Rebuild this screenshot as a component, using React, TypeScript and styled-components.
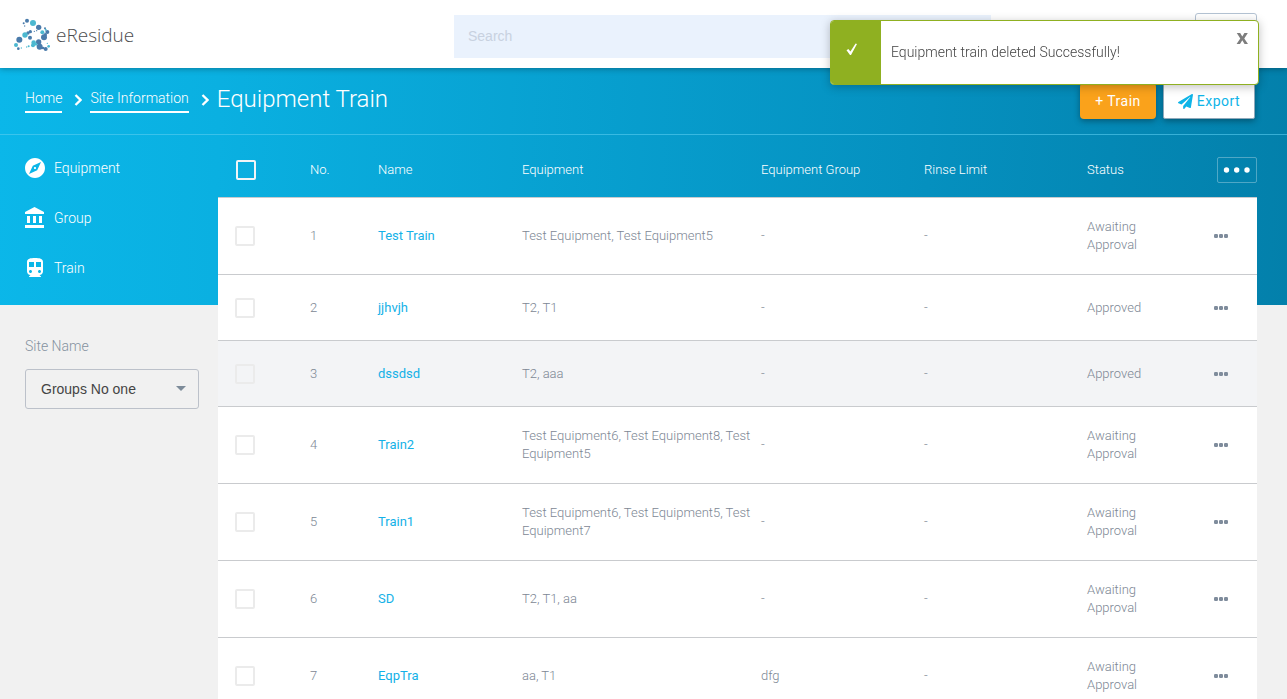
import React from "react";
import styled, { createGlobalStyle } from "styled-components";
import { MdExplore } from "react-icons/md";
import { FaPaperPlane } from "react-icons/fa";

const GlobalStyle = createGlobalStyle`
  *, *::before, *::after { box-sizing: border-box; }
  body {
    margin: 0;
    background: #f1f1f1;
    font-family: Roboto, "Liberation Sans", sans-serif;
    font-weight: 300;
    color: #fff;
  }
  a { color: inherit; text-decoration: none; }
`;

const Page = styled.div`
  display: flex;
  flex-direction: column;
  height: 100vh;
  overflow-y: auto;
  scrollbar-width: none;
`;

const TopBar = styled.header`
  flex: none;
  display: flex;
  align-items: flex-start;
  height: 68px;
  padding: 13px 30px 0 14px;
  background: #fff;
  box-shadow: 0 1px 6px rgba(0, 0, 0, 0.3);
  z-index: 1;
`;

const Brand = styled.a`
  flex: none;
  display: flex;
  align-items: center;
  gap: 5px;
  width: 440px;
  height: 44px;
  color: #4c4d4f;
  font: 300 19px/24px "Open Sans", sans-serif;
`;

const SearchBox = styled.input`
  flex: 1;
  min-width: 0;
  height: 43px;
  margin-top: 2px;
  padding: 0 14px 2px;
  border: 0;
  background: #eaf2fd;
  color: #58595b;
  font: 400 14px "Liberation Sans", Arial, sans-serif;
  &::placeholder { color: #c8d1e0; opacity: 1; }
`;

const Account = styled.div`
  flex: none;
  display: flex;
  justify-content: flex-end;
  width: 266px;
`;

const AccountButton = styled.button`
  width: 62px;
  height: 42px;
  border: 1px solid #b4c3d3;
  border-radius: 3px;
  background: #fff;
`;

const Content = styled.main`
  flex: none;
  background: linear-gradient(92deg, #0bb7e9 0%, #0ab0e1 17%, #0590bf 72%, #0380ab 100%) 0 0 / 100% 237px no-repeat;
`;

const TitleBar = styled.div`
  display: flex;
  align-items: center;
  justify-content: space-between;
  height: 67px;
  padding: 0 32px 0 25px;
  border-bottom: 1px solid rgba(90, 205, 240, 0.6);
`;

const Crumbs = styled.nav`
  display: flex;
  align-items: center;
  margin-bottom: 5px;
`;

const CrumbLink = styled.a`
  height: 23px;
  margin-top: 5px;
  border-bottom: 2px solid #fff;
  font-size: 14px;
  line-height: 16px;
`;

const CrumbArrow = styled.svg`
  width: 8px;
  height: 12px;
  margin: 3px 8px 0 12px;
`;

const Title = styled.h1`
  margin: 0;
  font-size: 24px;
  line-height: 28px;
  font-weight: 300;
`;

const Actions = styled.div`
  display: flex;
  gap: 7px;
`;

const ActionButton = styled.button<{ $primary?: boolean }>`
  display: flex;
  align-items: center;
  justify-content: center;
  gap: 4px;
  width: ${(p) => (p.$primary ? 76 : 92)}px;
  height: 36px;
  padding: 0;
  border: ${(p) => (p.$primary ? "0" : "1px solid #8fa9bb")};
  border-radius: ${(p) => (p.$primary ? 4 : 2)}px;
  background: ${(p) => (p.$primary ? "#faa21b" : "#fff")};
  color: ${(p) => (p.$primary ? "#fff" : "#0eb4e8")};
  font: 400 14px Roboto, sans-serif;
  letter-spacing: 0.5px;
  box-shadow: 0 2px 6px rgba(0, 0, 0, 0.35);
`;

const Columns = styled.div`
  display: flex;
  align-items: flex-start;
  padding-right: 30px;
`;

const Sidebar = styled.aside`
  flex: none;
  width: 218px;
  padding: 8px 19px 0 25px;
`;

const NavList = styled.nav`
  display: flex;
  flex-direction: column;
`;

const NavItem = styled.a`
  display: flex;
  align-items: center;
  gap: 9px;
  height: 50px;
  font-size: 14px;
  svg { width: 20px; height: 24px; }
`;

const SiteLabel = styled.label`
  display: block;
  margin-top: 45px;
  color: #8592a0;
  font-size: 14px;
  line-height: 16px;
`;

const SelectWrap = styled.div`
  position: relative;
  margin-top: 15px;
`;

const SiteSelect = styled.select`
  appearance: none;
  width: 100%;
  height: 40px;
  padding: 0 15px;
  border: 1px solid #bcc1ca;
  border-radius: 3px;
  background: transparent;
  color: #444;
  font: 400 14px "Liberation Sans", Arial, sans-serif;
`;

const SelectArrow = styled.svg`
  position: absolute;
  right: 13px;
  top: 17px;
  width: 10px;
  height: 5px;
  pointer-events: none;
`;

const TrainTable = styled.table`
  flex: 1;
  width: 100%;
  table-layout: fixed;
  border-collapse: separate;
  border-spacing: 0;
  font-size: 13px;
  line-height: 18px;
`;

const HeadCell = styled.th`
  height: 62px;
  padding: 7px 0 0 4px;
  font-weight: 300;
  text-align: left;
  vertical-align: middle;
  &:first-child { padding-left: 18px; }
  &:last-child { text-align: right; }
`;

const Row = styled.tr<{ $active?: boolean }>`
  background: ${(p) => (p.$active ? "#f3f4f6" : "#fff")};
  color: #7d8794;
`;

const Cell = styled.td`
  height: 66px;
  padding: 20px 0 20px 4px;
  border-top: 1px solid #c9cbce;
  vertical-align: middle;
  &:first-child { padding: 0 0 0 17px; }
  &:last-child { padding: 0 0 0 28px; }
`;

const Check = styled.input<{ $light?: boolean }>`
  appearance: none;
  display: block;
  width: 20px;
  height: 20px;
  margin: 0;
  border: 2px solid ${(p) => (p.$light ? "#f1f5f7" : "#ebebeb")};
  border-radius: 2px;
  background: transparent;
`;

const StatusText = styled.span`
  display: block;
  max-width: 84px;
`;

const TrainLink = styled.a`
  color: #14b1e7;
  font-weight: 400;
`;

const ColumnsButton = styled.button`
  display: inline-flex;
  align-items: center;
  justify-content: center;
  width: 40px;
  height: 26px;
  padding: 0;
  border: 1px solid rgba(255, 255, 255, 0.3);
  border-radius: 2px;
  background: transparent;
  vertical-align: middle;
`;

const RowButton = styled.button`
  display: flex;
  padding: 0;
  border: 0;
  background: transparent;
`;

const Toast = styled.div`
  position: fixed;
  top: 20px;
  right: 28px;
  z-index: 2;
  display: flex;
  width: 429px;
  height: 65px;
  border: 1px solid #8fb021;
  border-radius: 4px;
  background: #fff;
  box-shadow: 0 2px 10px rgba(0, 0, 0, 0.25);
  color: #444;
  overflow: hidden;
`;

const ToastMark = styled.div`
  display: flex;
  justify-content: center;
  width: 50px;
  padding: 22px 8px 0 0;
  background: #8fb021;
`;

const ToastText = styled.p`
  flex: 1;
  margin: 0;
  padding: 22px 10px;
  font-size: 14px;
  line-height: 18px;
`;

const ToastClose = styled.button`
  align-self: flex-start;
  margin: 4px 10px 0 0;
  padding: 0;
  border: 0;
  background: transparent;
  color: #7d7d7d;
  font: 700 20px/24px "Open Sans", sans-serif;
`;

const BLUE = "#4a7bab";
const TEAL = "#4cb8d0";
const logoDots: [number, number, number, string][] = [
  [39, 6, 6, BLUE], [29, 14, 3, BLUE], [32, 22, 2, BLUE], [57, 13, 9, TEAL],
  [74, 26, 8, BLUE], [93, 29, 3, BLUE], [100, 40, 6, BLUE], [85, 41, 6, TEAL],
  [95, 33, 3, TEAL], [90, 56, 9, BLUE], [94, 48, 5, BLUE], [49, 39, 5, BLUE], [42, 43, 5, BLUE],
  [61, 38, 2, BLUE], [68, 36, 2, BLUE], [33, 49, 8, TEAL], [16, 63, 9, BLUE],
  [6, 79, 6, TEAL], [48, 57, 6, BLUE], [59, 72, 7, TEAL], [57, 80, 6, TEAL], [74, 70, 8, BLUE],
  [77, 84, 9, BLUE], [66, 77, 4, TEAL], [95, 91, 6, BLUE], [104, 83, 4, TEAL], [100, 74, 2, TEAL],
  [13, 90, 4, BLUE], [22, 88, 2, TEAL], [38, 85, 2, TEAL], [44, 83, 3, TEAL], [87, 88, 4, BLUE],
];

type Train = { name: string; equipment: string; group: string; status: string };

const AWAITING = "Awaiting Approval";
const trains: Train[] = [
  { name: "Test Train", equipment: "Test Equipment, Test Equipment5", group: "-", status: AWAITING },
  { name: "jjhvjh", equipment: "T2, T1", group: "-", status: "Approved" },
  { name: "dssdsd", equipment: "T2, aaa", group: "-", status: "Approved" },
  { name: "Train2", equipment: "Test Equipment6, Test Equipment8, Test Equipment5", group: "-", status: AWAITING },
  { name: "Train1", equipment: "Test Equipment6, Test Equipment5, Test Equipment7", group: "-", status: AWAITING },
  { name: "SD", equipment: "T2, T1, aa", group: "-", status: AWAITING },
  { name: "EqpTra", equipment: "aa, T1", group: "dfg", status: AWAITING },
];

const Arrow = () => (
  <CrumbArrow viewBox="0 0 8 12" fill="none" stroke="#fff" strokeWidth="2.3" aria-hidden="true">
    <path d="M1.5 1l5 5-5 5" />
  </CrumbArrow>
);

export default function App() {
  return (
    <Page>
      <GlobalStyle />
      <TopBar>
        <Brand href="#">
          <svg width="37" height="34" viewBox="0 0 111 102" aria-hidden="true">
            {logoDots.map(([x, y, r, fill], i) => (
              <circle key={i} cx={x} cy={y + 2} r={r} fill={fill} />
            ))}
          </svg>
          eResidue
        </Brand>
        <SearchBox type="search" placeholder="Search" aria-label="Search" />
        <Account>
          <AccountButton aria-label="Account" />
        </Account>
      </TopBar>
      <Content>
        <TitleBar>
          <Crumbs aria-label="Breadcrumb">
            <CrumbLink href="#">Home</CrumbLink>
            <Arrow />
            <CrumbLink href="#">Site Information</CrumbLink>
            <Arrow />
            <Title>Equipment Train</Title>
          </Crumbs>
          <Actions>
            <ActionButton $primary>+ Train</ActionButton>
            <ActionButton>
              <FaPaperPlane size={15} />
              Export
            </ActionButton>
          </Actions>
        </TitleBar>
        <Columns>
          <Sidebar>
            <NavList>
              <NavItem href="#"><MdExplore viewBox="2 0 20 24" />Equipment</NavItem>
              <NavItem href="#">
                <svg viewBox="2 0 20 24" fill="currentColor" aria-hidden="true">
                  <path d="M4 10v7h3v-7H4zm6 0v7h3v-7h-3zM2 22h19v-3H2v3zm14-12v7h3v-7h-3zm-4.5-9L2 6v2h19V6l-9.5-5z" />
                </svg>
                Group
              </NavItem>
              <NavItem href="#">
                <svg viewBox="2 0 20 24" fill="currentColor" aria-hidden="true">
                  <path d="M12 2c-4.42 0-8 .5-8 4v9.5C4 17.43 5.57 19 7.5 19L6 20.5v.5h12v-.5L16.5 19c1.93 0 3.5-1.57 3.5-3.5V6c0-3.5-3.58-4-8-4zM7.5 17c-.83 0-1.5-.67-1.5-1.5S6.67 14 7.5 14s1.5.67 1.5 1.5S8.33 17 7.5 17zm3.5-6H6V6h5v5zm5.5 6c-.83 0-1.5-.67-1.5-1.5s.67-1.5 1.5-1.5 1.5.67 1.5 1.5-.67 1.5-1.5 1.5zm1.5-6h-5V6h5v5z" />
                </svg>
                Train
              </NavItem>
            </NavList>
            <SiteLabel htmlFor="site">Site Name</SiteLabel>
            <SelectWrap>
              <SiteSelect id="site">
                <option>Groups No one</option>
              </SiteSelect>
              <SelectArrow viewBox="0 0 10 5" aria-hidden="true">
                <path d="M0 0h10L5 5z" fill="#7d8b99" />
              </SelectArrow>
            </SelectWrap>
          </Sidebar>
          <TrainTable>
            <colgroup>
              <col style={{ width: 88 }} />
              <col style={{ width: 68 }} />
              <col style={{ width: 144 }} />
              <col style={{ width: "23%" }} />
              <col />
              <col />
              <col style={{ width: 103 }} />
              <col style={{ width: 71 }} />
            </colgroup>
            <thead>
              <tr>
                <HeadCell><Check $light type="checkbox" aria-label="Select all" /></HeadCell>
                <HeadCell>No.</HeadCell>
                <HeadCell>Name</HeadCell>
                <HeadCell>Equipment</HeadCell>
                <HeadCell>Equipment Group</HeadCell>
                <HeadCell>Rinse Limit</HeadCell>
                <HeadCell>Status</HeadCell>
                <HeadCell>
                  <ColumnsButton aria-label="Choose columns">
                    <svg width="28" height="6" viewBox="0 0 28 6" fill="#fff">
                      <circle cx="3.5" cy="3" r="2.7" />
                      <circle cx="13.7" cy="3" r="2.7" />
                      <circle cx="24" cy="3" r="2.7" />
                    </svg>
                  </ColumnsButton>
                </HeadCell>
              </tr>
            </thead>
            <tbody>
              {trains.map((t, i) => (
                <Row key={t.name} $active={i === 2}>
                  <Cell><Check type="checkbox" aria-label={`Select ${t.name}`} /></Cell>
                  <Cell>{i + 1}</Cell>
                  <Cell><TrainLink href="#">{t.name}</TrainLink></Cell>
                  <Cell>{t.equipment}</Cell>
                  <Cell>{t.group}</Cell>
                  <Cell>-</Cell>
                  <Cell><StatusText>{t.status}</StatusText></Cell>
                  <Cell>
                    <RowButton aria-label={`Actions for ${t.name}`}>
                      <svg width="14" height="4" viewBox="0 0 14 4" fill="#7f8c9c">
                        <rect x="0" width="4" height="4" rx="1.2" />
                        <rect x="5" width="4" height="4" rx="1.2" />
                        <rect x="10" width="4" height="4" rx="1.2" />
                      </svg>
                    </RowButton>
                  </Cell>
                </Row>
              ))}
            </tbody>
          </TrainTable>
        </Columns>
      </Content>
      <Toast role="status">
        <ToastMark>
          <svg width="12" height="13" viewBox="0 0 12 13" fill="#fff" aria-hidden="true">
            <path d="M0.5 7.2L2.4 6L4.4 8.6L9.6 0.6L11 1L5 12H4z" />
          </svg>
        </ToastMark>
        <ToastText>Equipment train deleted Successfully!</ToastText>
        <ToastClose aria-label="Close">x</ToastClose>
      </Toast>
    </Page>
  );
}
